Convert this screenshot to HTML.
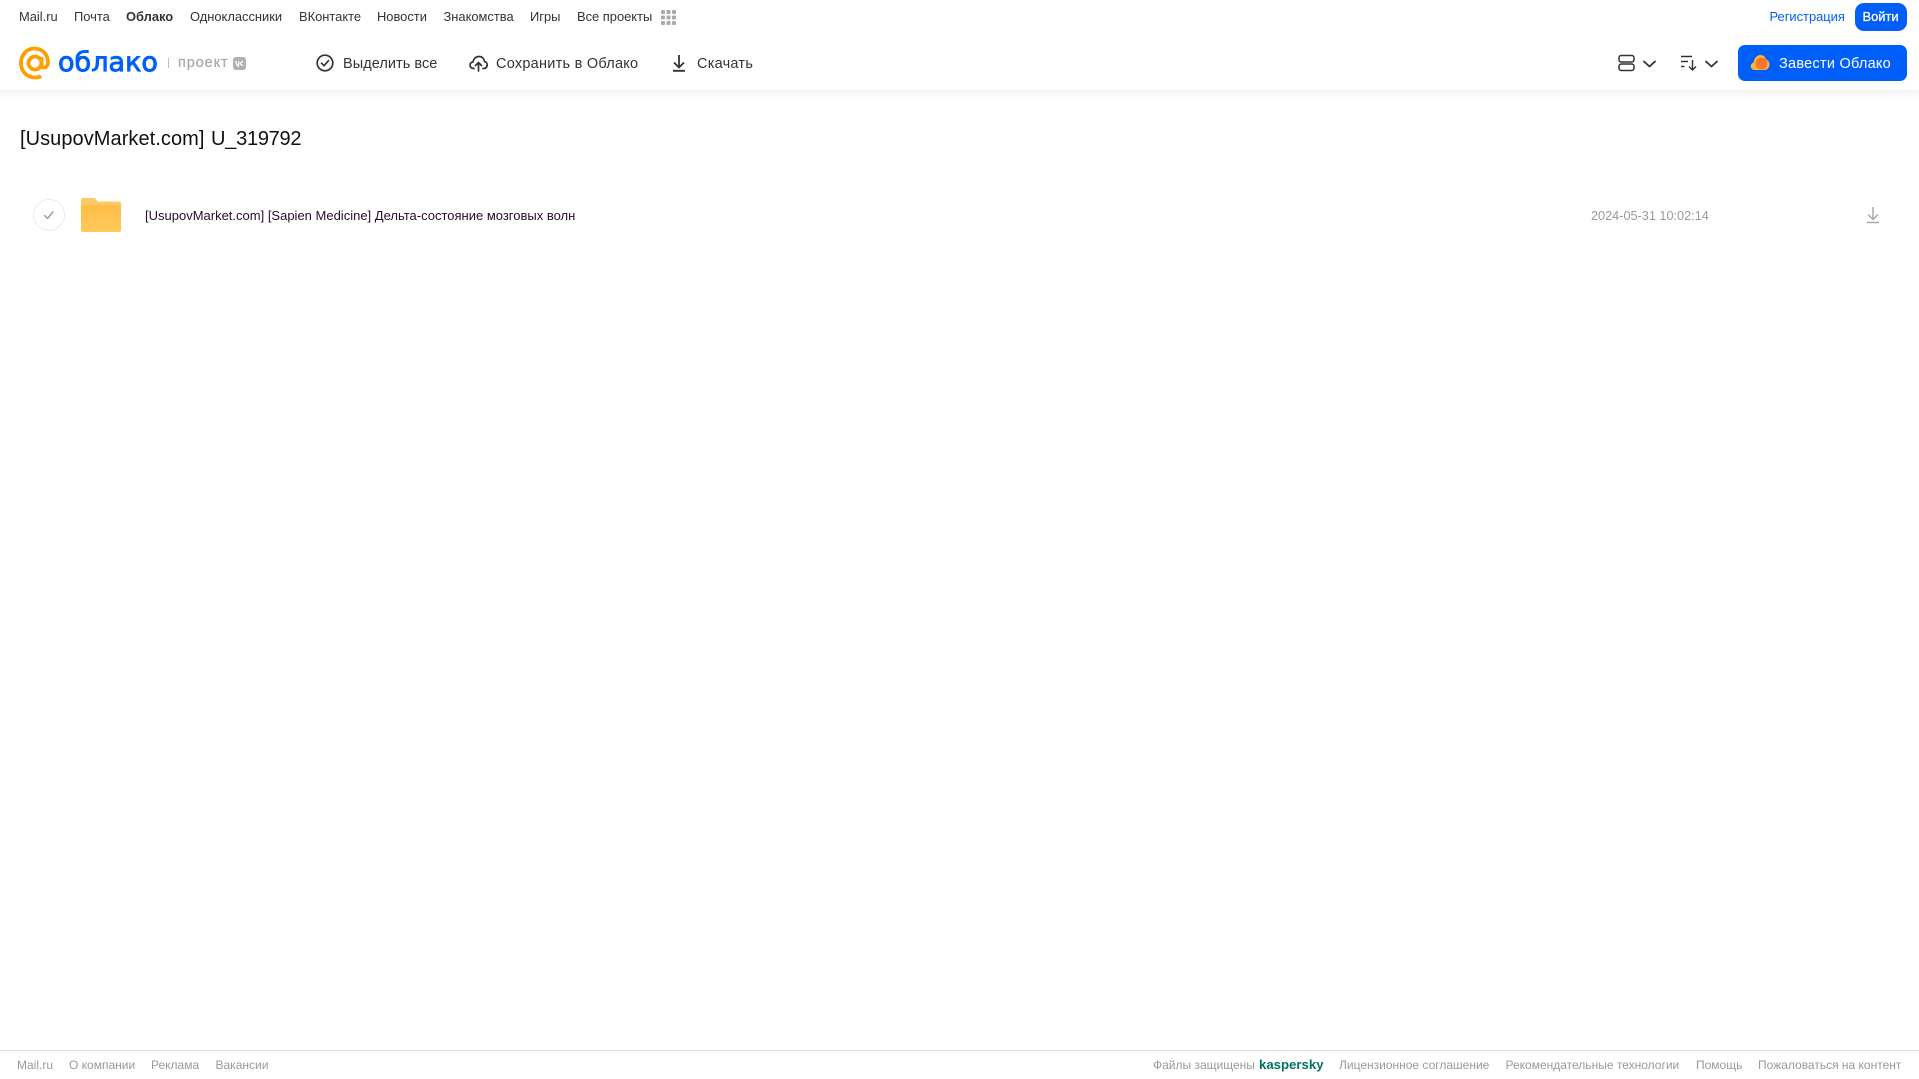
<!DOCTYPE html>
<html lang="ru"><head><meta charset="utf-8"><title>Облако</title>
<style>
html,body{margin:0;padding:0;background:#fff;}
#p{position:relative;width:1919px;height:1079px;overflow:hidden;background:#fff;font-family:"Liberation Sans",Arial,sans-serif;}
#p span,#p svg,#p div{position:absolute;display:block;}
#p span{white-space:nowrap;}
.n{top:8px;font-size:12.9px;line-height:17px;color:#333;}
.t{top:55px;font-size:14.5px;line-height:18px;color:#333;letter-spacing:.25px;}
.f{top:1057px;font-size:12px;line-height:16px;color:#999;}
</style></head><body><div id="p">
<div style="left:0;top:90px;width:1919px;height:12px;background:linear-gradient(#f5f5f5,#fff)"></div>
<span class="n" style="left:19px">Mail.ru</span>
<span class="n" style="left:74px">Почта</span>
<span class="n" style="left:126px;font-weight:bold">Облако</span>
<span class="n" style="left:190px">Одноклассники</span>
<span class="n" style="left:299px">ВКонтакте</span>
<span class="n" style="left:377px">Новости</span>
<span class="n" style="left:443.500px">Знакомства</span>
<span class="n" style="left:530px">Игры</span>
<span class="n" style="left:577px">Все проекты</span>
<svg style="left:661px;top:10px" width="15" height="15" fill="#aaa"><rect width="4" height="4" rx="1"/><rect x="5.500" width="4" height="4" rx="1"/><rect x="11" width="4" height="4" rx="1"/><rect y="5.500" width="4" height="4" rx="1"/><rect x="5.500" y="5.500" width="4" height="4" rx="1"/><rect x="11" y="5.500" width="4" height="4" rx="1"/><rect y="11" width="4" height="4" rx="1"/><rect x="5.500" y="11" width="4" height="4" rx="1"/><rect x="11" y="11" width="4" height="4" rx="1"/></svg>
<span class="n" style="left:1769.500px;color:#005ff9">Регистрация</span>
<div style="left:1855px;top:3px;width:52px;height:28px;border-radius:9px;background:#005ff9"></div>
<span class="n" style="left:1862.500px;color:#fff;-webkit-text-stroke:.3px #fff;">Войти</span>

<svg style="left:18px;top:46px" width="34" height="34" viewBox="0 0 34 34" fill="none" stroke="#ff9e00" stroke-width="3.800"><circle cx="17" cy="17" r="6.500"/><path d="M23.500 11v8c0 3.500 5 3.500 6 0 .4-1 .5-2 .5-3 0-7.500-6-13.500-13.500-13.500S3 8.500 3 17s6 14.500 14 14.500c2.500 0 4.500-.5 6-1.500"/></svg>
<svg style="left:55px;top:40px" width="110" height="46"><text x="3" y="31" font-family="'DejaVu Sans',sans-serif" font-size="27" fill="#005ff9" stroke="#005ff9" stroke-width=".9" textLength="100" lengthAdjust="spacingAndGlyphs">облако</text></svg>
<div style="left:168px;top:58px;width:1px;height:10px;background:#bbb"></div>
<span style="left:178px;top:55px;font-size:14.500px;line-height:17px;color:#aaa;letter-spacing:.9px;-webkit-text-stroke:.3px #aaa">проект</span>
<div style="left:233px;top:57px;width:13px;height:13px;border-radius:3px;background:#b0b0b0"></div>
<svg style="left:235px;top:60px" width="9" height="7" fill="none" stroke="#fff" stroke-width="1.200"><path d="M.5 1l2 5h1V1M8 1L5 3.500 8 6"/></svg>

<svg style="left:316px;top:54px" width="18" height="18" fill="none" stroke="#333" stroke-width="1.700"><circle cx="9" cy="9" r="7.800"/><path d="M5.500 9.200l2.500 2.500 4.500-5" stroke-linecap="round" stroke-linejoin="round"/></svg>
<span class="t" style="left:343px;letter-spacing:.05px">Выделить все</span>
<svg style="left:469px;top:54px" width="19" height="18" fill="none" stroke="#333" stroke-width="1.700" stroke-linecap="round" stroke-linejoin="round"><path d="M5 14.500H4.500C2.500 14.500 1 13 1 11.200c0-1.800 1.300-3 3-3.200C4.500 5 6.800 2.500 10 2.500c3 0 5 2 5.500 5 1.500.3 2.700 1.700 2.700 3.500 0 2-1.500 3.500-3.400 3.500H14"/><path d="M9.500 17V9M6.500 11.500l3-3 3 3"/></svg>
<span class="t" style="left:496px">Сохранить в Облако</span>
<svg style="left:672px;top:54px" width="14" height="18" fill="none" stroke="#333" stroke-width="1.800"><path d="M7 1v12M2 8.500l5 5 5-5M1 16.800h12"/></svg>
<span class="t" style="left:697px">Скачать</span>

<svg style="left:1618px;top:54px" width="17" height="18" fill="none" stroke="#333" stroke-width="1.500"><rect x="1" y="1.500" width="15" height="6.500" rx="2.200"/><rect x="1" y="10" width="15" height="6.500" rx="2.200"/></svg>
<svg style="left:1643px;top:59.500px" width="13" height="8" fill="none" stroke="#333" stroke-width="1.800" stroke-linecap="round" stroke-linejoin="round"><path d="M1 1.500l5.500 5 5.500-5"/></svg>
<svg style="left:1681px;top:54px" width="17" height="17" fill="none" stroke="#333" stroke-width="1.400"><path d="M0 2.500h11M0 7.500h7M0 12.500h3.500M11.500 6v10M8 12.500l3.500 3.500 3.500-3.500"/></svg>
<svg style="left:1705px;top:59.500px" width="13" height="8" fill="none" stroke="#333" stroke-width="1.800" stroke-linecap="round" stroke-linejoin="round"><path d="M1 1.500l5.500 5 5.500-5"/></svg>
<div style="left:1738px;top:45px;width:169px;height:36px;border-radius:7px;background:#005ff9"></div>
<svg style="left:1750px;top:54px" width="20" height="17"><path d="M5 16C2 16 .5 14 .8 11.800 1 9.800 2.500 8.800 3.800 8.500 4 4 7 1 10.500 1c3 0 5 2 5.500 4.500 2.300.5 3.500 2.700 3.500 5 0 3-2 5.500-5 5.500z" fill="#ffb13d"/><circle cx="11.500" cy="9.500" r="5.800" fill="#f4762a"/></svg>
<span class="t" style="left:1779px;color:#fff">Завести Облако</span>

<span style="left:20px;top:125.500px;font-size:20px;line-height:26px;color:#111;letter-spacing:.06px">[UsupovMarket.com]</span>
<span style="left:211px;top:125.500px;font-size:20px;line-height:26px;color:#111;letter-spacing:-.25px">U_319792</span>

<svg style="left:33px;top:199px" width="32" height="32" fill="none"><circle cx="16" cy="16" r="15.500" stroke="#ececec"/><path d="M11.500 16.500l3 3 5.500-6.500" stroke="#999" stroke-width="1.400" stroke-linecap="round" stroke-linejoin="round"/></svg>
<svg style="left:81px;top:198px" width="40" height="34"><defs><linearGradient id="g" x1="0" y1="0" x2="0" y2="1"><stop offset="0" stop-color="#ffbe45"/><stop offset="1" stop-color="#ffc85c"/></linearGradient></defs><path d="M0 12V2a2 2 0 0 1 2-2h10c2 0 3.500 1 4.500 3.500H38a2 2 0 0 1 2 2V12z" fill="#fdc968"/><rect y="7" width="40" height="27" rx="2" fill="url(#g)"/></svg>
<span style="left:145px;top:208px;font-size:13px;line-height:16px;color:#2a0a2e">[UsupovMarket.com] [Sapien Medicine] Дельта-состояние мозговых волн</span>
<span style="left:1591px;top:208px;font-size:12.700px;line-height:16px;color:#999">2024-05-31 10:02:14</span>
<svg style="left:1866px;top:207px" width="14" height="17" fill="none" stroke="#aaa" stroke-width="1.500"><path d="M7 0v12M2 7.500l5 5 5-5M1 15.500h12"/></svg>

<div style="left:0;top:1050px;width:1919px;height:1px;background:#ddd"></div>
<span class="f" style="left:17px">Mail.ru</span>
<span class="f" style="left:69px">О компании</span>
<span class="f" style="left:151px">Реклама</span>
<span class="f" style="left:215.500px">Вакансии</span>
<span class="f" style="left:1153px">Файлы защищены</span>
<span class="f" style="left:1259px;font-size:13.200px;font-weight:bold;color:#00745f">kaspersky</span>
<span class="f" style="left:1339px">Лицензионное соглашение</span>
<span class="f" style="left:1505.500px">Рекомендательные технологии</span>
<span class="f" style="left:1696px">Помощь</span>
<span class="f" style="left:1758px">Пожаловаться на контент</span>
</div></body></html>
